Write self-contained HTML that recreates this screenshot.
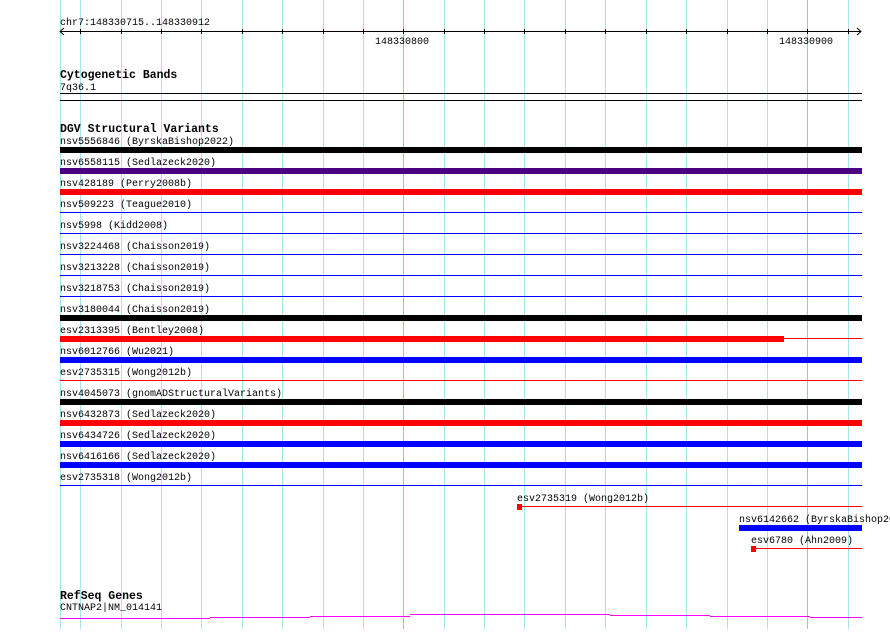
<!DOCTYPE html>
<html><head><meta charset="utf-8"><style>
body{margin:0;background:#fff;width:890px;height:629px;overflow:hidden}
text{font-family:"Liberation Mono","DejaVu Sans Mono",monospace;font-size:10px;fill:#000}
.b{font-weight:bold;font-size:11.5px}
</style></head><body>
<svg width="890" height="629" xmlns="http://www.w3.org/2000/svg">
<g stroke="#a8e4ec" stroke-width="1">
<line x1="60.5" y1="0" x2="60.5" y2="629"/>
<line x1="80.5" y1="0" x2="80.5" y2="629"/>
<line x1="121.5" y1="0" x2="121.5" y2="629"/>
<line x1="161.5" y1="0" x2="161.5" y2="629"/>
<line x1="201.5" y1="0" x2="201.5" y2="629"/>
<line x1="242.5" y1="0" x2="242.5" y2="629"/>
<line x1="282.5" y1="0" x2="282.5" y2="629"/>
<line x1="323.5" y1="0" x2="323.5" y2="629"/>
<line x1="363.5" y1="0" x2="363.5" y2="629"/>
<line x1="444.5" y1="0" x2="444.5" y2="629"/>
<line x1="484.5" y1="0" x2="484.5" y2="629"/>
<line x1="524.5" y1="0" x2="524.5" y2="629"/>
<line x1="565.5" y1="0" x2="565.5" y2="629"/>
<line x1="605.5" y1="0" x2="605.5" y2="629"/>
<line x1="646.5" y1="0" x2="646.5" y2="629"/>
<line x1="686.5" y1="0" x2="686.5" y2="629"/>
<line x1="727.5" y1="0" x2="727.5" y2="629"/>
<line x1="767.5" y1="0" x2="767.5" y2="629"/>
<line x1="848.5" y1="0" x2="848.5" y2="629"/>
</g>
<g stroke="#90c8e0"><line x1="403.5" y1="0" x2="403.5" y2="629"/><line x1="807.5" y1="0" x2="807.5" y2="629"/></g>
<text x="60" y="25">chr7:148330715..148330912</text>
<g stroke="#000" stroke-width="1">
<line x1="60" y1="31.5" x2="861" y2="31.5"/>
<polyline points="64,28 60,31.5 64,35" fill="none"/>
<polyline points="857,28 861,31.5 857,35" fill="none"/>
<path d="M80.5 29v5M121.5 29v5M161.5 29v5M201.5 29v5M242.5 29v5M282.5 29v5M323.5 29v5M363.5 29v5M403.5 29v5M444.5 29v5M484.5 29v5M524.5 29v5M565.5 29v5M605.5 29v5M646.5 29v5M686.5 29v5M727.5 29v5M767.5 29v5M807.5 29v5M848.5 29v5"/>
<line x1="60" y1="93.5" x2="862" y2="93.5"/>
<line x1="60" y1="100.5" x2="862" y2="100.5"/>
</g>
<text x="375" y="44">148330800</text>
<text x="779" y="44">148330900</text>
<text class="b" x="60" y="78">Cytogenetic Bands</text>
<text x="60" y="90">7q36.1</text>
<text class="b" x="60" y="132">DGV Structural Variants</text>

<text x="60" y="144">nsv5556846 (ByrskaBishop2022)</text><rect x="60" y="147" width="802" height="6" fill="#000"/>
<text x="60" y="165">nsv6558115 (Sedlazeck2020)</text><rect x="60" y="168" width="802" height="6" fill="#4b0082"/>
<text x="60" y="186">nsv428189 (Perry2008b)</text><rect x="60" y="189" width="802" height="6" fill="#f00"/>
<text x="60" y="207">nsv509223 (Teague2010)</text><rect x="60" y="212" width="802" height="1" fill="#00f"/>
<text x="60" y="228">nsv5998 (Kidd2008)</text><rect x="60" y="233" width="802" height="1" fill="#00f"/>
<text x="60" y="249">nsv3224468 (Chaisson2019)</text><rect x="60" y="254" width="802" height="1" fill="#00f"/>
<text x="60" y="270">nsv3213228 (Chaisson2019)</text><rect x="60" y="275" width="802" height="1" fill="#00f"/>
<text x="60" y="291">nsv3218753 (Chaisson2019)</text><rect x="60" y="296" width="802" height="1" fill="#00f"/>
<text x="60" y="312">nsv3180044 (Chaisson2019)</text><rect x="60" y="315" width="802" height="6" fill="#000"/>
<text x="60" y="333">esv2313395 (Bentley2008)</text><rect x="60" y="336" width="724" height="6" fill="#f00"/><rect x="784" y="338" width="78" height="1" fill="#f00"/>
<text x="60" y="354">nsv6012766 (Wu2021)</text><rect x="60" y="357" width="802" height="6" fill="#00f"/>
<text x="60" y="375">esv2735315 (Wong2012b)</text><rect x="60" y="380" width="802" height="1" fill="#f00"/>
<text x="60" y="396">nsv4045073 (gnomADStructuralVariants)</text><rect x="60" y="399" width="802" height="6" fill="#000"/>
<text x="60" y="417">nsv6432873 (Sedlazeck2020)</text><rect x="60" y="420" width="802" height="6" fill="#f00"/>
<text x="60" y="438">nsv6434726 (Sedlazeck2020)</text><rect x="60" y="441" width="802" height="6" fill="#00f"/>
<text x="60" y="459">nsv6416166 (Sedlazeck2020)</text><rect x="60" y="462" width="802" height="6" fill="#00f"/>
<text x="60" y="480">esv2735318 (Wong2012b)</text><rect x="60" y="485" width="802" height="1" fill="#00f"/>

<text x="517" y="501">esv2735319 (Wong2012b)</text><rect x="517" y="504" width="5" height="6" fill="#f00"/><rect x="517" y="506" width="345" height="1" fill="#f00"/>
<text x="739" y="522">nsv6142662 (ByrskaBishop2022)</text><rect x="739" y="525" width="123" height="6" fill="#00f"/>
<text x="751" y="543">esv6780 (Ahn2009)</text><rect x="751" y="546" width="5" height="6" fill="#f00"/><rect x="751" y="548" width="111" height="1" fill="#f00"/>

<text class="b" x="60" y="599">RefSeq Genes</text>
<text x="60" y="610">CNTNAP2|NM_014141</text>
<path d="M60 618.5H210M210 617.5H310M310 616.5H410M410 614.5H510M510 614.5H610M610 615.5H710M710 616.5H810M810 617.5H862" stroke="#f0f" stroke-width="1" fill="none"/>
</svg>
</body></html>
